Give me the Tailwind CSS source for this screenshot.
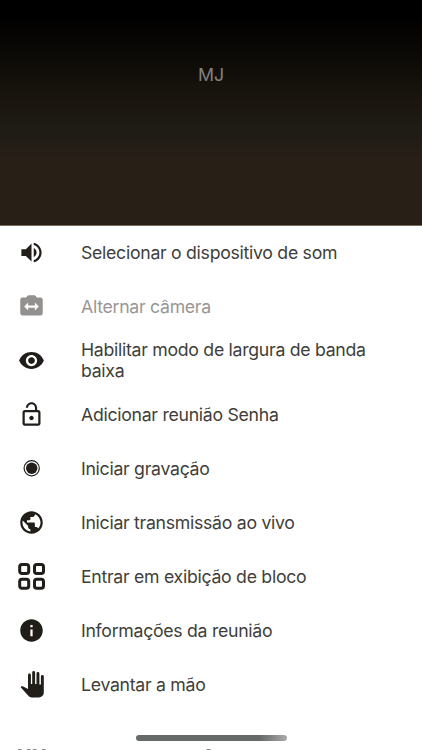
<!DOCTYPE html>
<html lang="pt">
<head>
<meta charset="utf-8">
<title>Menu</title>
<script src="https://cdn.jsdelivr.net/npm/@tailwindcss/browser@4"></script>
</head>
<body class="bg-white">
<main class="relative flex h-[750px] w-[422px] flex-col overflow-hidden bg-white font-['Inter','Liberation_Sans',sans-serif] text-[17.7px] leading-[21px] tracking-[-0.29px] text-[#403e3b]">
  <header class="flex h-[226px] shrink-0 flex-col items-center border-b border-[#776c62] bg-[linear-gradient(to_bottom,#000_0,#000_14px,#0c0a07_58px,#19150e_95px,#1f1b15_132px,#281f17_158px,#281f17_100%)] pt-[64px]">
    <span class="text-[17.8px] tracking-normal text-[#85827f]">MJ</span>
  </header>
  <ul class="-mt-px flex flex-col text-[#211e1a]">
    <li class="flex h-[54px] shrink-0 items-center pl-[18px]">
      <svg class="size-[27px] shrink-0" viewBox="0 0 24 24" fill="currentColor"><path d="M3 9v6h4l5 5V4L7 9H3zm13.500 3c0-1.770-1.020-3.290-2.500-4.030v8.050c1.480-.73 2.500-2.250 2.500-4.020zM14 3.230v2.060c2.890.86 5 3.540 5 6.710s-2.110 5.850-5 6.710v2.060c4.010-.91 7-4.490 7-8.770s-2.990-7.860-7-8.770z"/></svg>
      <span class="ml-[36px] w-[300px] text-[#403e3b]">Selecionar o dispositivo de som</span>
    </li>
    <li class="flex h-[54px] shrink-0 items-center pl-[18px]">
      <svg class="size-[27px] shrink-0 text-[#929190]" viewBox="0 0 24 24" fill="currentColor"><path d="M20 4h-3.170L15 2H9L7.170 4H4c-1.100 0-2 .9-2 2v12c0 1.100.9 2 2 2h16c1.100 0 2-.9 2-2V6c0-1.100-.9-2-2-2zm-5 11.500V13H9v2.500L5.500 12 9 8.500V11h6V8.500l3.500 3.500-3.500 3.500z"/></svg>
      <span class="ml-[36px] w-[300px] text-[#979695]">Alternar câmera</span>
    </li>
    <li class="flex h-[54px] shrink-0 items-center pl-[18px]">
      <svg class="size-[27px] shrink-0" viewBox="0 0 24 24" fill="currentColor"><path d="M12 4.500C7 4.500 2.730 7.610 1 12c1.730 4.390 6 7.500 11 7.500s9.270-3.110 11-7.500c-1.730-4.390-6-7.500-11-7.500zM12 17c-2.760 0-5-2.240-5-5s2.240-5 5-5 5 2.240 5 5-2.240 5-5 5zm0-8c-1.660 0-3 1.340-3 3s1.340 3 3 3 3-1.340 3-3-1.340-3-3-3z"/></svg>
      <span class="ml-[36px] w-[300px] text-[#403e3b]">Habilitar modo de largura de banda baixa</span>
    </li>
    <li class="flex h-[54px] shrink-0 items-center pl-[18px]">
      <svg class="size-[27px] shrink-0" viewBox="0 0 24 24" fill="currentColor"><path d="M12 17c1.100 0 2-.9 2-2s-.9-2-2-2-2 .9-2 2 .9 2 2 2zm6-9h-1V6c0-2.760-2.240-5-5-5S7 3.240 7 6h1.900c0-1.710 1.390-3.100 3.100-3.100s3.100 1.390 3.100 3.100v2H6c-1.100 0-2 .9-2 2v10c0 1.100.9 2 2 2h12c1.100 0 2-.9 2-2V10c0-1.100-.9-2-2-2zm0 12H6V10h12v10z"/></svg>
      <span class="ml-[36px] w-[300px] text-[#403e3b]">Adicionar reunião Senha</span>
    </li>
    <li class="flex h-[54px] shrink-0 items-center pl-[18px]">
      <svg class="size-[27px] shrink-0" viewBox="0 0 27 27" fill="none"><circle cx="13.700" cy="13.300" r="7.600" stroke="currentColor" stroke-width="1.200"/><circle cx="13.700" cy="13.300" r="5.700" fill="currentColor"/></svg>
      <span class="ml-[36px] w-[300px] text-[#403e3b]">Iniciar gravação</span>
    </li>
    <li class="flex h-[54px] shrink-0 items-center pl-[18px]">
      <svg class="size-[27px] shrink-0" viewBox="0 0 24 24" fill="currentColor"><path d="M12 2C6.480 2 2 6.480 2 12s4.480 10 10 10 10-4.480 10-10S17.520 2 12 2zm-1 17.930c-3.950-.49-7-3.850-7-7.930 0-.62.08-1.210.21-1.790L9 15v1c0 1.100.9 2 2 2v1.930zm6.900-2.540c-.26-.81-1-1.390-1.900-1.390h-1v-3c0-.55-.45-1-1-1H8v-2h2c.55 0 1-.45 1-1V7h2c1.100 0 2-.9 2-2v-.41c2.930 1.190 5 4.060 5 7.410 0 2.080-.8 3.970-2.100 5.390z"/></svg>
      <span class="ml-[36px] w-[300px] text-[#403e3b]">Iniciar transmissão ao vivo</span>
    </li>
    <li class="flex h-[54px] shrink-0 items-center pl-[18px]">
      <svg class="size-[27px] shrink-0" viewBox="0 0 27 27" fill="none" stroke="currentColor" stroke-width="3"><rect x="1.700" y="1.500" width="9" height="9" rx="2.300"/><rect x="16.500" y="1.500" width="9" height="9" rx="2.300"/><rect x="1.700" y="16.300" width="9" height="9" rx="2.300"/><rect x="16.500" y="16.300" width="9" height="9" rx="2.300"/></svg>
      <span class="ml-[36px] w-[300px] text-[#403e3b]">Entrar em exibição de bloco</span>
    </li>
    <li class="flex h-[54px] shrink-0 items-center pl-[18px]">
      <svg class="size-[27px] shrink-0" viewBox="0 0 24 24" fill="currentColor"><path d="M12 2C6.480 2 2 6.480 2 12s4.480 10 10 10 10-4.480 10-10S17.520 2 12 2zm1 15h-2v-6h2v6zm0-8h-2V7h2v2z"/></svg>
      <span class="ml-[36px] w-[300px] text-[#403e3b]">Informações da reunião</span>
    </li>
    <li class="flex h-[54px] shrink-0 items-center pl-[18px]">
      <svg class="size-[27px] shrink-0" viewBox="0 0 27 27" fill="currentColor"><path transform="translate(.8 0)" d="M9.200 18V3.900a1.450 1.450 0 0 1 2.900 0V13h1.300V1.500a1.450 1.450 0 0 1 2.900 0V13h1.400V2.400a1.450 1.450 0 0 1 2.900 0V13.500h1.500V5.500a1.450 1.450 0 0 1 2.900 0V21.500a5 5 0 0 1-5 5H13c-1.600 0-2.600-.6-3.700-1.900L2.100 16.500c-.5-1 .7-1.800 2.300-1.100z"/></svg>
      <span class="ml-[36px] w-[300px] text-[#403e3b]">Levantar a mão</span>
    </li>
  </ul>
  <div class="mt-[37px] flex h-[2px] shrink-0 items-start pl-[18px]">
    <svg class="h-[2px] w-[193px]" viewBox="0 0 193 2" fill="#8b8988"><path d="M0 1h3.500v1H0zM9 1h3.500v1H9zM15 1h3.500v1H15zM24 1h3.500v1H24zM188.500 1h4v1h-4z"/></svg>
  </div>
  <div class="absolute left-[136px] top-[734.500px] h-[6px] w-[150.500px] rounded-full bg-[linear-gradient(to_right,#666a68_0,#666a68_82%,#aaa_100%)]"></div>
</main>
</body>
</html>
